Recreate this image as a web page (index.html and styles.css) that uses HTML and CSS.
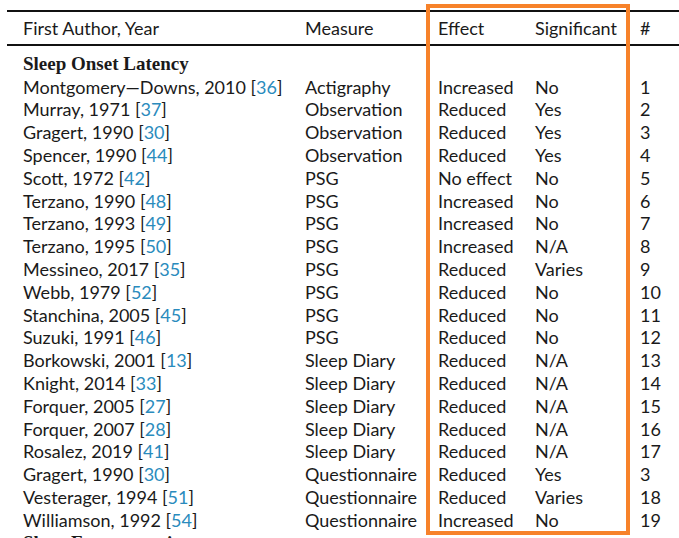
FILE: index.html
```html
<!DOCTYPE html>
<html>
<head>
<meta charset="utf-8">
<link rel="stylesheet" href="styles.css">
</head>
<body>
<div class="page">
  <div class="table">
    <div class="rule top"></div>
    <div class="row head">
      <div>First Author, Year</div><div>Measure</div><div>Effect</div><div>Significant</div><div>#</div>
    </div>
    <div class="rule"></div>
    <div class="body">
      <div class="section">Sleep Onset Latency</div>
      <div class="row"><div>Montgomery—Downs, 2010 <span class="ref">[<a>36</a>]</span></div><div>Actigraphy</div><div>Increased</div><div>No</div><div>1</div></div>
      <div class="row"><div>Murray, 1971 <span class="ref">[<a>37</a>]</span></div><div>Observation</div><div>Reduced</div><div>Yes</div><div>2</div></div>
      <div class="row"><div>Gragert, 1990 <span class="ref">[<a>30</a>]</span></div><div>Observation</div><div>Reduced</div><div>Yes</div><div>3</div></div>
      <div class="row"><div>Spencer, 1990 <span class="ref">[<a>44</a>]</span></div><div>Observation</div><div>Reduced</div><div>Yes</div><div>4</div></div>
      <div class="row"><div>Scott, 1972 <span class="ref">[<a>42</a>]</span></div><div>PSG</div><div>No effect</div><div>No</div><div>5</div></div>
      <div class="row"><div>Terzano, 1990 <span class="ref">[<a>48</a>]</span></div><div>PSG</div><div>Increased</div><div>No</div><div>6</div></div>
      <div class="row"><div>Terzano, 1993 <span class="ref">[<a>49</a>]</span></div><div>PSG</div><div>Increased</div><div>No</div><div>7</div></div>
      <div class="row"><div>Terzano, 1995 <span class="ref">[<a>50</a>]</span></div><div>PSG</div><div>Increased</div><div>N/A</div><div>8</div></div>
      <div class="row"><div>Messineo, 2017 <span class="ref">[<a>35</a>]</span></div><div>PSG</div><div>Reduced</div><div>Varies</div><div>9</div></div>
      <div class="row"><div>Webb, 1979 <span class="ref">[<a>52</a>]</span></div><div>PSG</div><div>Reduced</div><div>No</div><div>10</div></div>
      <div class="row"><div>Stanchina, 2005 <span class="ref">[<a>45</a>]</span></div><div>PSG</div><div>Reduced</div><div>No</div><div>11</div></div>
      <div class="row"><div>Suzuki, 1991 <span class="ref">[<a>46</a>]</span></div><div>PSG</div><div>Reduced</div><div>No</div><div>12</div></div>
      <div class="row"><div>Borkowski, 2001 <span class="ref">[<a>13</a>]</span></div><div>Sleep Diary</div><div>Reduced</div><div>N/A</div><div>13</div></div>
      <div class="row"><div>Knight, 2014 <span class="ref">[<a>33</a>]</span></div><div>Sleep Diary</div><div>Reduced</div><div>N/A</div><div>14</div></div>
      <div class="row"><div>Forquer, 2005 <span class="ref">[<a>27</a>]</span></div><div>Sleep Diary</div><div>Reduced</div><div>N/A</div><div>15</div></div>
      <div class="row"><div>Forquer, 2007 <span class="ref">[<a>28</a>]</span></div><div>Sleep Diary</div><div>Reduced</div><div>N/A</div><div>16</div></div>
      <div class="row"><div>Rosalez, 2019 <span class="ref">[<a>41</a>]</span></div><div>Sleep Diary</div><div>Reduced</div><div>N/A</div><div>17</div></div>
      <div class="row"><div>Gragert, 1990 <span class="ref">[<a>30</a>]</span></div><div>Questionnaire</div><div>Reduced</div><div>Yes</div><div>3</div></div>
      <div class="row"><div>Vesterager, 1994 <span class="ref">[<a>51</a>]</span></div><div>Questionnaire</div><div>Reduced</div><div>Varies</div><div>18</div></div>
      <div class="row"><div>Williamson, 1992 <span class="ref">[<a>54</a>]</span></div><div>Questionnaire</div><div>Increased</div><div>No</div><div>19</div></div>
      <div class="section">Sleep Fragmentation</div>
    </div>
  </div>
  <div class="highlight"></div>
</div>
</body>
</html>
```

FILE: styles.css
```css
html, body {
  margin: 0;
  padding: 0;
  background: #ffffff;
  overflow: hidden;
}

.page {
  position: relative;
  width: 679px;
  height: 538px;
  overflow: hidden;
  font-family: "Lato", "Noto Sans", sans-serif;
  font-size: 18px;
  color: #1a1a1a;
}

.table {
  margin-left: 7px;
  padding-top: 10px;
}

.rule {
  height: 2px;
  background: #111111;
}

.row {
  display: grid;
  grid-template-columns: 282px 133px 97px 105px 1fr;
  padding-left: 16px;
  line-height: 22.8px;
  white-space: nowrap;
}

.row.head {
  padding-top: 5px;
  padding-bottom: 4px;
}

.body {
  padding-top: 7px;
}

.section {
  padding-left: 16px;
  line-height: 22.8px;
  font-family: "Liberation Serif", "DejaVu Serif", serif;
  font-weight: bold;
  font-size: 19px;
}

.ref a {
  color: #2a8bbd;
}

.highlight {
  position: absolute;
  left: 426px;
  top: 4px;
  width: 196px;
  height: 523px;
  border: 4px solid #f7822a;
}
```
